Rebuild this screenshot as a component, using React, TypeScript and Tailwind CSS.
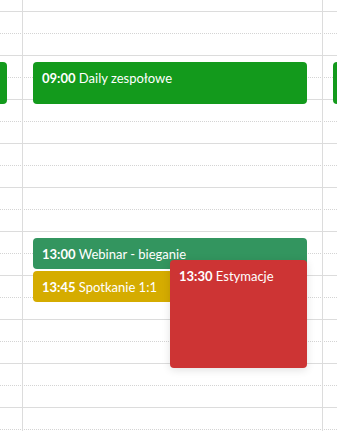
const HOUR = 44;

type CalEvent = {
  time: string;
  title: string;
  start: number;
  end: number;
  color: string;
  half?: boolean;
  shadow?: boolean;
};

const events: CalEvent[] = [
  { time: '13:00', title: 'Webinar - bieganie', start: 13, end: 13.75, color: 'bg-[#33955f]' },
  { time: '13:45', title: 'Spotkanie 1:1', start: 13.75, end: 14.5, color: 'bg-[#d5ac00]' },
  { time: '13:30', title: 'Estymacje', start: 13.5, end: 16, color: 'bg-[#cd3434]', half: true, shadow: true },
];

function EventCard({ ev }: { ev: CalEvent }) {
  // place on the day column by time
  const top = 62 + (ev.start - 9) * HOUR;
  const height = (ev.end - ev.start) * HOUR - 2;
  return (
    <div
      className={`absolute rounded-[4px] pl-[9px] pr-2 py-2 text-white text-[13px] leading-4 overflow-hidden whitespace-nowrap ${ev.color} ${
        ev.half ? 'left-1/2 right-0' : 'left-0 right-0'
      } ${ev.shadow ? 'shadow-[0_2px_8px_rgba(0,0,0,0.12)]' : ''}`}
      style={{ top, height }}
    >
      <span className="font-bold">{ev.time}</span> {ev.title}
    </div>
  );
}

export default function App() {
  return (
    <div
      className="relative w-[337px] h-[431px] overflow-hidden bg-white"
      style={{ fontFamily: 'Lato, "Noto Sans", sans-serif' }}
    >
      {/* half-hour rows */}
      <div className="-mt-[32px] flex flex-col">
        {Array.from({ length: 11 }).map((_, i) => (
          <div key={i} className="h-[44px] border-b border-[#dcdcdc]">
            <div className="h-[22px] border-b border-dotted border-[#d4d4d4]" />
          </div>
        ))}
      </div>

      {/* day columns */}
      <div className="absolute inset-y-0 -left-[278px] flex">
        {[0, 1, 2].map((col) => (
          <div key={col} className="relative w-[300px] border-l border-[#dcdcdc]">
            <div className="absolute inset-y-0 left-[10px] right-[15px]">
              <div className="absolute left-0 right-0 top-[62px] h-[42px] rounded-[4px] bg-[#139a1c] pl-[9px] pr-2 py-2 text-white text-[13px] leading-4">
                {col === 1 && (
                  <>
                    <span className="font-bold">09:00</span> Daily zespołowe
                  </>
                )}
              </div>
              {col === 1 && events.map((ev) => <EventCard key={ev.time} ev={ev} />)}
            </div>
          </div>
        ))}
      </div>
    </div>
  );
}
